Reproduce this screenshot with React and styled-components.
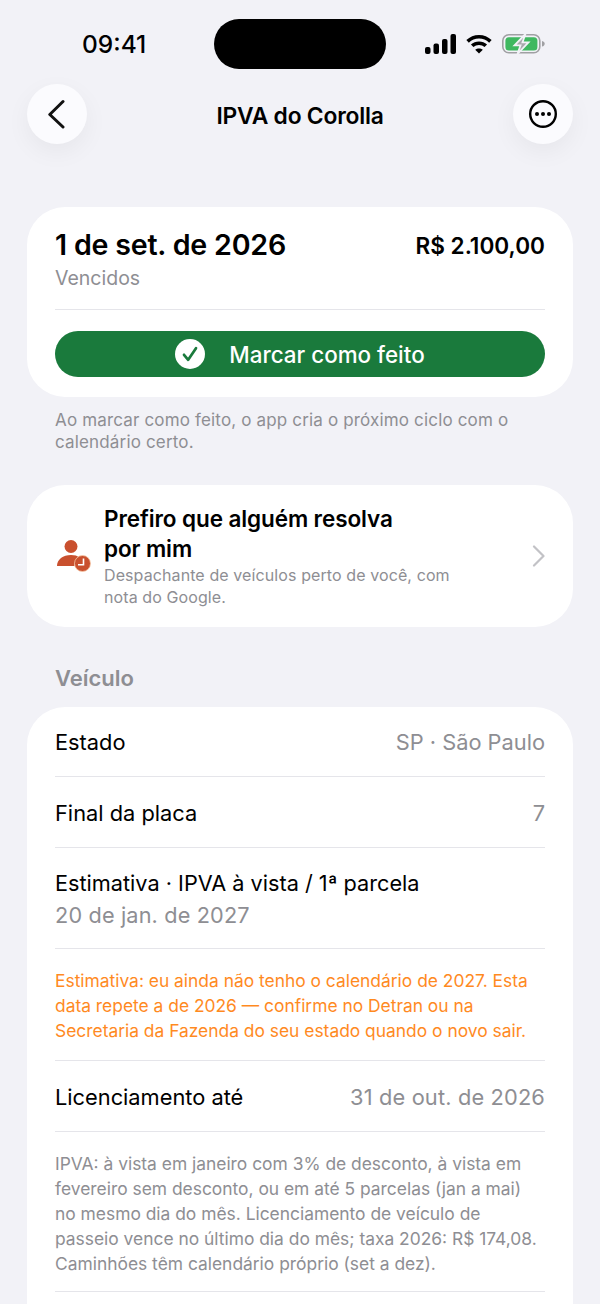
import styled, { createGlobalStyle } from "styled-components";

const Global = createGlobalStyle`
  html, body {
    margin: 0;
    padding: 0;
    height: 1304px;
    overflow: hidden;
    background: #f2f2f7;
    font-family: Inter, "Liberation Sans", sans-serif;
    -webkit-font-smoothing: antialiased;
  }
`;

const Screen = styled.div`
  width: 600px;
  height: 1304px;
  overflow: hidden;
  background: #f2f2f7;
  color: #000;
`;

const StatusBar = styled.div`
  height: 69px;
  padding: 19px 0 0 82px;
  box-sizing: border-box;
  display: flex;
  align-items: flex-start;
`;

const Time = styled.div`
  width: 132px;
  font-size: 24.5px;
  font-weight: 500;
  line-height: 51px;
`;

const Island = styled.div`
  width: 172px;
  height: 50px;
  border-radius: 25px;
  background: #000;
`;

const StatusIcons = styled.div`
  height: 50px;
  display: flex;
  align-items: center;
  gap: 10px;
  margin-left: 39px;
`;

const NavBar = styled.div`
  margin-top: 15px;
  padding: 0 27px;
  display: flex;
  align-items: center;
  justify-content: space-between;
`;

const RoundButton = styled.div`
  width: 60px;
  height: 60px;
  border-radius: 50%;
  background: #fbfbfe;
  box-shadow: 0 8px 24px rgba(0, 0, 0, 0.05);
  display: flex;
  align-items: center;
  justify-content: center;
`;

const NavTitle = styled.div`
  font-size: 22.8px;
  font-weight: 560;
  letter-spacing: -0.2px;
  padding-top: 2px;
`;

const Content = styled.div`
  padding: 63px 27px 0;
`;

const Card = styled.div`
  background: #fff;
  border-radius: 38px;
  box-sizing: border-box;
`;

const DueCard = styled(Card)`
  height: 190px;
  padding: 22px 28px 0;
`;

const DueTop = styled.div`
  display: flex;
  justify-content: space-between;
  align-items: flex-start;
  height: 80px;
  border-bottom: 1px solid #e5e5ea;
`;

const DueDate = styled.div`
  font-size: 28.6px;
  font-weight: 560;
  line-height: 32px;
  letter-spacing: -0.2px;
`;

const DueLabel = styled.div`
  font-size: 19.5px;
  line-height: 26px;
  color: #8e8e93;
  margin-top: 4px;
`;

const Amount = styled.div`
  font-size: 22.6px;
  font-weight: 560;
  line-height: 34px;
`;

const DoneButton = styled.div`
  margin-top: 21px;
  height: 46px;
  border-radius: 23px;
  background: #1a7a3c;
  color: #fff;
  display: flex;
  align-items: center;
  justify-content: center;
  gap: 24px;
  font-size: 22.4px;
  font-weight: 500;
`;

const CheckDot = styled.div`
  width: 30px;
  height: 30px;
  border-radius: 50%;
  background: #fff;
  display: flex;
  align-items: center;
  justify-content: center;
`;

const Hint = styled.p`
  margin: 12px 0 0;
  padding: 0 28px;
  font-size: 17px;
  line-height: 22px;
  color: #8e8e93;
  letter-spacing: 0.16px;
`;

const HelpCard = styled(Card)`
  margin-top: 32px;
  height: 142px;
  padding: 0 28px 0 30px;
  display: flex;
  align-items: center;
`;

const HelpIcon = styled.div`
  width: 47px;
  flex: none;
  display: flex;
`;

const HelpText = styled.div`
  flex: 1;
`;

const HelpTitle = styled.div`
  font-size: 22.5px;
  font-weight: 560;
  line-height: 30px;
  letter-spacing: -0.1px;
`;

const HelpSub = styled.div`
  font-size: 16px;
  line-height: 22px;
  color: #8e8e93;
  letter-spacing: 0.1px;
`;

const SectionLabel = styled.div`
  margin-top: 36px;
  padding-left: 28px;
  height: 44px;
  font-size: 22px;
  font-weight: 560;
  line-height: 30px;
  color: #8e8e93;
`;

const DetailCard = styled(Card)`
  padding: 0 28px;
`;

const Row = styled.div`
  display: flex;
  justify-content: space-between;
  align-items: center;
  height: ${(p) => p.$h}px;
  box-sizing: border-box;
  padding-top: 1px;
  border-bottom: 1px solid #e5e5ea;
  font-size: 21.8px;
`;

const RowValue = styled.span`
  color: #8e8e93;
`;

const DateValue = styled(RowValue)`
  letter-spacing: 0.15px;
`;

const StackRow = styled.div`
  height: 101px;
  box-sizing: border-box;
  padding-top: 19px;
  border-bottom: 1px solid #e5e5ea;
  font-size: 21.7px;
  line-height: 32px;
`;

const Note = styled.div`
  height: ${(p) => p.$h}px;
  box-sizing: border-box;
  padding-top: 19px;
  border-bottom: 1px solid #e5e5ea;
  font-size: 17.4px;
  line-height: 25px;
  color: ${(p) => p.$color};
`;

const LastRow = styled.div`
  height: 70px;
`;

const Signal = () => (
  <svg width="31" height="20" viewBox="0 0 31 20" fill="#000">
    <rect x="0" y="13" width="5.5" height="7" rx="2" />
    <rect x="8.5" y="9.5" width="5.5" height="10.5" rx="2" />
    <rect x="17" y="5" width="5.5" height="15" rx="2" />
    <rect x="25.5" y="0" width="5.5" height="20" rx="2" />
  </svg>
);

const Wifi = () => (
  <svg width="26" height="20" viewBox="0 0 26 20" fill="none" stroke="#000" strokeWidth="3.6">
    <path d="M1.6 7.4C8 1.2 18 1.2 24.4 7.4" />
    <path d="M6.2 11.8C9.9 8.3 16.1 8.3 19.8 11.8" />
    <path d="M13 19.6 9.2 15.7C11.3 14 14.7 14 16.8 15.7Z" fill="#000" stroke="none" />
  </svg>
);

const Battery = () => (
  <svg width="43" height="22" viewBox="0 0 43 22">
    <rect x="0.8" y="1.8" width="37" height="18" rx="6" fill="none" stroke="#a0a0a3" strokeWidth="1.6" />
    <rect x="3.4" y="4.2" width="32" height="13.2" rx="3.5" fill="#3fb860" />
    <path d="M40 8c1.7.4 2.7 1.5 2.7 2.8s-1 2.4-2.7 2.8z" fill="#a0a0a3" />
    <path d="M23.5 1 12.5 12.3h6L15.5 21 26.5 9.3h-6z" fill="#a9a9ac" stroke="#f2f2f7" strokeWidth="1.8" />
  </svg>
);

const Back = () => (
  <svg width="18" height="30" viewBox="0 0 18 30" fill="none" stroke="#111" strokeWidth="3" strokeLinecap="round" strokeLinejoin="round">
    <path d="M15 2.5 1.8 15.5 15 28" />
  </svg>
);

const More = () => (
  <svg width="30" height="30" viewBox="0 0 30 30" fill="#000">
    <circle cx="15" cy="15" r="12.8" fill="none" stroke="#000" strokeWidth="2.4" />
    <circle cx="9" cy="15" r="2" />
    <circle cx="15" cy="15" r="2" />
    <circle cx="21" cy="15" r="2" />
  </svg>
);

const Check = () => (
  <svg width="18" height="18" viewBox="0 0 18 18" fill="none" stroke="#1a7a3c" strokeWidth="2.7" strokeLinecap="round" strokeLinejoin="round">
    <path d="M3 9.8 7.2 14.8 15 3.2" />
  </svg>
);

const PersonClock = () => (
  <svg width="34" height="34" viewBox="0 0 34 34">
    <circle cx="14" cy="7.5" r="6.5" fill="#c9502e" />
    <path d="M0 27c0-6.5 6-11 14-11 3.5 0 6.5.8 8.5 2.5-3.5 1.5-5 4.5-5 8.5z" fill="#c9502e" />
    <circle cx="25.5" cy="24.5" r="8" fill="#c9502e" stroke="#f6c9a8" strokeWidth="0.8" />
    <path d="M26.5 19.5V25.8h-5.5" fill="none" stroke="#fff" strokeWidth="1.6" />
  </svg>
);

const Chevron = () => (
  <svg width="13" height="22" viewBox="0 0 13 22" fill="none" stroke="#c2c2c6" strokeWidth="2.2" strokeLinecap="round" strokeLinejoin="round">
    <path d="M2 1.5 11.5 11 2 20.5" />
  </svg>
);

export default function App() {
  return (
    <Screen>
      <Global />
      <StatusBar>
        <Time>09:41</Time>
        <Island />
        <StatusIcons>
          <Signal />
          <Wifi />
          <Battery />
        </StatusIcons>
      </StatusBar>
      <NavBar>
        <RoundButton>
          <Back />
        </RoundButton>
        <NavTitle>IPVA do Corolla</NavTitle>
        <RoundButton>
          <More />
        </RoundButton>
      </NavBar>
      <Content>
        <DueCard>
          <DueTop>
            <div>
              <DueDate>1 de set. de 2026</DueDate>
              <DueLabel>Vencidos</DueLabel>
            </div>
            <Amount>R$ 2.100,00</Amount>
          </DueTop>
          <DoneButton>
            <CheckDot>
              <Check />
            </CheckDot>
            Marcar como feito
          </DoneButton>
        </DueCard>
        <Hint>Ao marcar como feito, o app cria o próximo ciclo com o calendário certo.</Hint>
        <HelpCard>
          <HelpIcon>
            <PersonClock />
          </HelpIcon>
          <HelpText>
            <HelpTitle>
              Prefiro que alguém resolva
              <br />
              por mim
            </HelpTitle>
            <HelpSub>
              Despachante de veículos perto de você, com
              <br />
              nota do Google.
            </HelpSub>
          </HelpText>
          <Chevron />
        </HelpCard>
        <SectionLabel>Veículo</SectionLabel>
        <DetailCard>
          <Row $h={70}>
            Estado
            <RowValue>SP · São Paulo</RowValue>
          </Row>
          <Row $h={71}>
            Final da placa
            <RowValue>7</RowValue>
          </Row>
          <StackRow>
            Estimativa · IPVA à vista / 1ª parcela
            <br />
            <DateValue>20 de jan. de 2027</DateValue>
          </StackRow>
          <Note $h={112} $color="#ff8a1f">
            Estimativa: eu ainda não tenho o calendário de 2027. Esta
            <br />
            data repete a de 2026 — confirme no Detran ou na
            <br />
            Secretaria da Fazenda do seu estado quando o novo sair.
          </Note>
          <Row $h={71}>
            Licenciamento até
            <DateValue>31 de out. de 2026</DateValue>
          </Row>
          <Note $h={160} $color="#8e8e93">
            IPVA: à vista em janeiro com 3% de desconto, à vista em
            <br />
            fevereiro sem desconto, ou em até 5 parcelas (jan a mai)
            <br />
            no mesmo dia do mês. Licenciamento de veículo de
            <br />
            passeio vence no último dia do mês; taxa 2026: R$ 174,08.
            <br />
            Caminhões têm calendário próprio (set a dez).
          </Note>
          <LastRow />
        </DetailCard>
      </Content>
    </Screen>
  );
}
